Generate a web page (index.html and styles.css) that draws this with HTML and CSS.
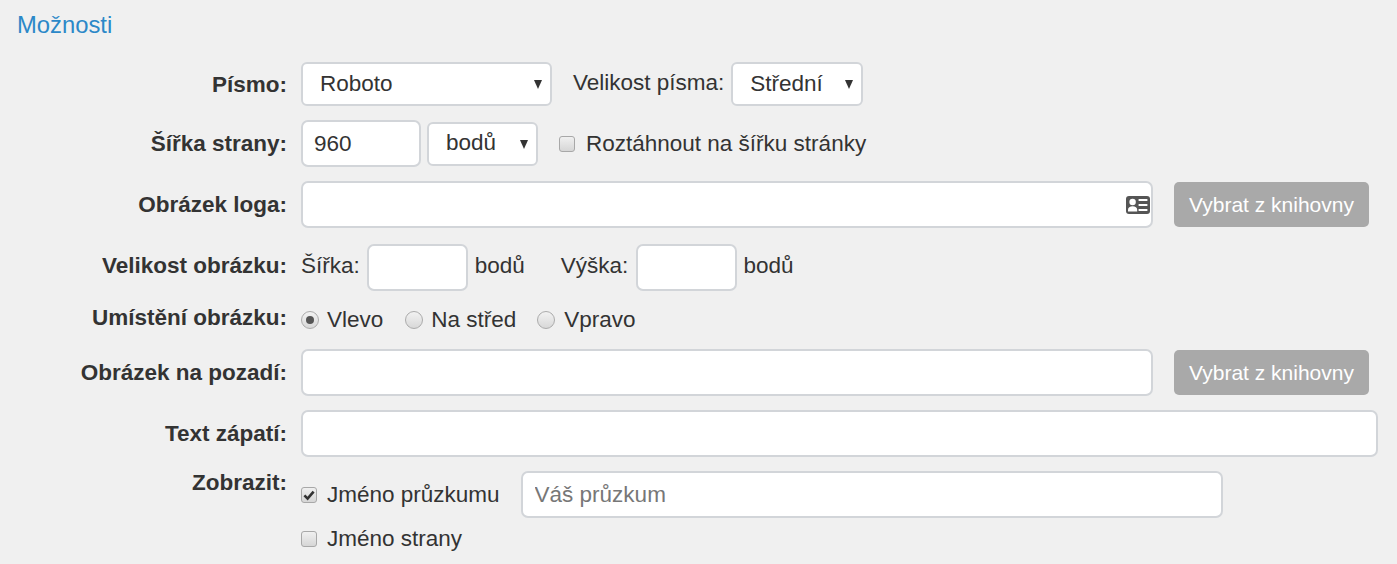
FILE: index.html
```html
<!DOCTYPE html>
<html lang="cs">
<head>
<meta charset="utf-8">
<title>Možnosti</title>
<link rel="stylesheet" href="styles.css">
</head>
<body>
<h2 class="title">Možnosti</h2>
<form class="form">
  <div class="row row-font">
    <label class="lab">Písmo:</label>
    <span class="sel sel-font"><select><option>Roboto</option></select></span>
    <span class="txt gap-21">Velikost písma:</span>
    <span class="sel sel-size gap-7"><select><option>Střední</option></select></span>
  </div>
  <div class="row row-width">
    <label class="lab">Šířka strany:</label>
    <input class="inp inp-width" type="text" value="960">
    <span class="sel sel-unit gap-6"><select><option>bodů</option></select></span>
    <span class="box gap-21"></span>
    <span class="txt gap-11">Roztáhnout na šířku stránky</span>
  </div>
  <div class="row row-logo">
    <label class="lab">Obrázek loga:</label>
    <span class="inp-wrap">
      <input class="inp inp-full" type="text">
      <svg class="card" viewBox="0 0 24 18" width="24" height="18"><rect x="0" y="0" width="24" height="18" rx="3" fill="#555"/><circle cx="6.6" cy="6" r="3.2" fill="#fff"/><path d="M2 15.4v-1.6c0-2.4 1.9-3.6 4.6-3.6s4.6 1.2 4.6 3.6v1.6z" fill="#fff"/><path d="M12.6 4h8.8M12.6 9h8.8M12.6 14h8.8" stroke="#fff" stroke-width="2" fill="none"/></svg>
    </span>
    <button class="btn" type="button">Vybrat z knihovny</button>
  </div>
  <div class="row row-size">
    <label class="lab">Velikost obrázku:</label>
    <span class="txt">Šířka:</span>
    <input class="inp inp-num gap-7" type="text">
    <span class="txt gap-7">bodů</span>
    <span class="txt gap-36">Výška:</span>
    <input class="inp inp-num gap-8" type="text">
    <span class="txt gap-6">bodů</span>
  </div>
  <div class="row row-radio">
    <label class="lab">Umístění obrázku:</label>
    <span class="radio radio-on"></span>
    <span class="txt gap-8">Vlevo</span>
    <span class="radio gap-22"></span>
    <span class="txt gap-8">Na střed</span>
    <span class="radio gap-21"></span>
    <span class="txt gap-9">Vpravo</span>
  </div>
  <div class="row row-bg">
    <label class="lab">Obrázek na pozadí:</label>
    <span class="inp-wrap"><input class="inp inp-full" type="text"></span>
    <button class="btn" type="button">Vybrat z knihovny</button>
  </div>
  <div class="row row-footer">
    <label class="lab">Text zápatí:</label>
    <input class="inp inp-footer" type="text">
  </div>
  <div class="row row-show">
    <label class="lab lab-top">Zobrazit:</label>
    <div class="stack">
      <div class="line">
        <span class="box box-on"><svg viewBox="0 0 14 14" width="14" height="14"><path d="M2.4 7.4l3.2 3.2 6-7" stroke="#333" stroke-width="2.6" fill="none"/></svg></span>
        <span class="txt gap-10">Jméno průzkumu</span>
        <input class="inp inp-name gap-21" type="text" placeholder="Váš průzkum">
      </div>
      <div class="line line-second">
        <span class="box"></span>
        <span class="txt gap-10">Jméno strany</span>
      </div>
    </div>
  </div>
</form>
</body>
</html>
```
FILE: styles.css
```css
html, body { margin: 0; padding: 0; }
body {
  width: 1397px;
  height: 564px;
  overflow: hidden;
  background: #f0f0f0;
  color: #333;
  font-family: "Liberation Sans", Arial, sans-serif;
  font-size: 22.5px;
}
.title {
  margin: 0;
  padding: 11px 0 0 17px;
  height: 51px;
  box-sizing: border-box;
  font-size: 23.8px;
  line-height: 28px;
  font-weight: 400;
  color: #2b88c8;
}
.form { display: flex; flex-direction: column; }
.row { display: flex; align-items: center; }
.row-font { height: 44px; margin-top: 11px; }
.row-font .lab { margin-top: 2px; }
.row-font .txt { margin-bottom: 2px; }
.row-width { height: 47px; margin-top: 14px; }
.row-logo { height: 47px; margin-top: 14px; }
.row-size { height: 47px; margin-top: 16px; }
.row-size .lab, .row-size .txt { margin-bottom: 4px; }
.row-radio { height: 28px; margin-top: 14px; }
.row-radio .lab { margin-bottom: 2px; }
.row-radio .radio, .row-radio .txt { margin-top: 2px; }
.row-bg { height: 47px; margin-top: 16px; }
.row-footer { height: 47px; margin-top: 14px; }
.row-show { align-items: flex-start; margin-top: 14px; }
.lab {
  width: 287px;
  margin-right: 14px;
  flex: none;
  text-align: right;
  font-weight: 700;
  line-height: 28px;
}
.lab-top { margin-top: -2px; }
.txt { line-height: 28px; white-space: nowrap; }
.gap-6 { margin-left: 6px; }
.gap-7 { margin-left: 7px; }
.gap-8 { margin-left: 8px; }
.gap-9 { margin-left: 9px; }
.gap-10 { margin-left: 10px; }
.gap-11 { margin-left: 11px; }
.gap-21 { margin-left: 21px; }
.gap-22 { margin-left: 22px; }
.gap-36 { margin-left: 36px; }
.sel { position: relative; display: block; height: 44px; flex: none; }
.sel::after {
  content: "";
  position: absolute;
  top: 18px;
  right: 10px;
  border-left: 4.5px solid transparent;
  border-right: 4.5px solid transparent;
  border-top: 9px solid #333;
}
.sel select {
  appearance: none;
  -webkit-appearance: none;
  display: block;
  width: 100%;
  height: 44px;
  box-sizing: border-box;
  border: 2px solid #d2d5d9;
  border-radius: 6px;
  background: #fff;
  color: #333;
  font: inherit;
  padding: 0 0 2px 17px;
}
.sel-font { width: 251px; }
.sel-size { width: 132px; }
.sel-unit { width: 111px; }
.inp {
  display: block;
  height: 47px;
  box-sizing: border-box;
  border: 2px solid #d2d5d9;
  border-radius: 7px;
  background: #fff;
  color: #333;
  font: inherit;
  padding: 0 11px;
  flex: none;
}
.inp::placeholder { color: #777; opacity: 1; }
.inp-width { width: 120px; }
.inp-full { width: 852px; }
.inp-num { width: 101px; }
.inp-footer { width: 1077px; }
.inp-name { width: 702px; padding-left: 12px; }
.inp-wrap { position: relative; display: block; width: 852px; flex: none; }
.card { position: absolute; top: 15px; right: 3px; }
.btn {
  margin-left: 21px;
  width: 195px;
  height: 45px;
  flex: none;
  border: 0;
  border-radius: 5px;
  background: #a9a9a9;
  color: #fff;
  font: inherit;
  font-size: 21px;
  padding: 0;
  white-space: nowrap;
}
.box {
  display: flex;
  align-items: center;
  justify-content: center;
  width: 16px;
  height: 16px;
  flex: none;
  box-sizing: border-box;
  border: 1px solid #a8a8a8;
  border-radius: 3px;
  background: linear-gradient(#f0f0f0, #d6d6d6);
}
.radio {
  display: flex;
  align-items: center;
  justify-content: center;
  width: 18px;
  height: 18px;
  flex: none;
  box-sizing: border-box;
  border: 1px solid #ababab;
  border-radius: 50%;
  background: linear-gradient(#f2f2f2, #d8d8d8);
}
.radio-on::after {
  content: "";
  width: 8px;
  height: 8px;
  border-radius: 50%;
  background: #555;
}
.stack { display: flex; flex-direction: column; }
.line { display: flex; align-items: center; height: 47px; }
.line-second { height: 28px; margin-top: 7px; }
```
